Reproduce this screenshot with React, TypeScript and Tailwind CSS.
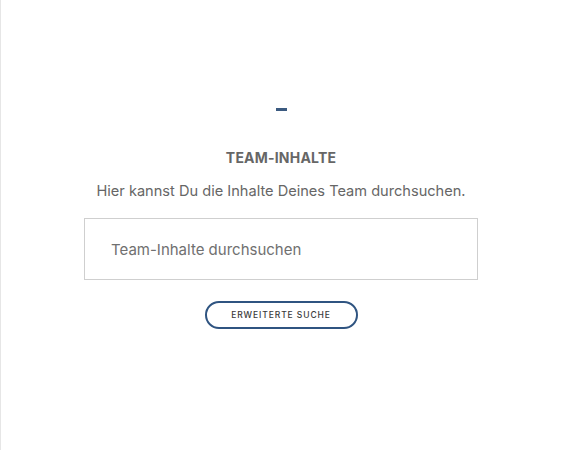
export default function App() {
  return (
    <div className="min-h-[450px] w-full border-l border-[#e6e6e6] bg-white font-['Inter','Noto_Sans',sans-serif]">
      <div className="flex flex-col items-center pt-[108px]">
        <div className="h-[3px] w-[11px] bg-[#3b5a80]" />
        <h2 className="mt-[37px] text-[14px] font-bold leading-[20px] tracking-[0.2px] text-[#666]">
          TEAM-INHALTE
        </h2>
        <p className="mt-[12px] text-[14.6px] leading-[22px] text-[#666]">
          Hier kannst Du die Inhalte Deines Team durchsuchen.
        </p>
        <div className="mt-[16px] w-[394px]">
          <input
            type="text"
            placeholder="Team-Inhalte durchsuchen"
            className="h-[62px] w-full border border-[#cfcfcf] bg-white px-[26px] text-[15px] text-[#666] outline-none placeholder:text-[#707070]"
          />
        </div>
        <button className="mt-[21px] h-[28px] w-[153px] rounded-full border-2 border-[#2f5481] text-[8.5px] font-medium tracking-[0.9px] text-[#3a3a3a]">
          ERWEITERTE SUCHE
        </button>
      </div>
    </div>
  );
}
